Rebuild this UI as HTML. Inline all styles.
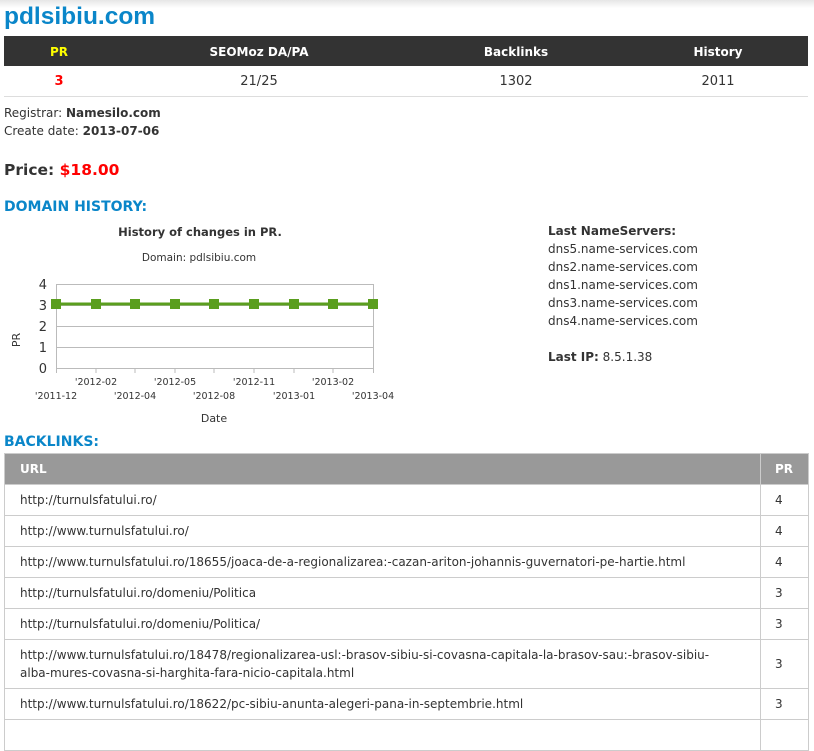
<!DOCTYPE html>
<html><head><meta charset="utf-8"><style>
*{box-sizing:border-box}
body{margin:0;width:814px;height:727px;overflow:hidden;font-family:"DejaVu Sans","Liberation Sans",sans-serif;font-size:12px;color:#333;background:#fff;position:relative}
.shadow{position:absolute;left:0;top:0;width:814px;height:8px;background:linear-gradient(#e6e6e6,#fff)}
h1{position:absolute;left:4px;top:3px;margin:0;font-size:24.5px;font-weight:bold;color:#0a86c9;font-family:"Liberation Sans",sans-serif}
table{border-collapse:collapse}
.t1{position:absolute;left:4px;top:36px;width:804px}
.t1 th{background:#333;color:#fff;height:30px;font-size:12px;font-weight:bold;padding-top:2px}
.t1 td{height:30px;text-align:center;border-bottom:1px solid #ddd;font-size:13px;padding-top:2px}
.info{position:absolute;left:4px;top:104px;line-height:18px}
.price{position:absolute;left:4px;top:161px;font-size:15.5px;font-weight:bold}
.h2{position:absolute;left:4px;font-size:14px;font-weight:bold;color:#0a86c9}
.ns{position:absolute;left:548px;top:222px;line-height:18px}
.t2{position:absolute;left:4px;top:453px;width:805px;border:1px solid #ccc}
.t2 th{background:#999;color:#fff;text-align:left;height:31px;padding:0 15px;border:1px solid #ccc;font-size:12px}
.t2 td{border:1px solid #ccc;height:31px;padding:0 15px;line-height:18px}
.t2 td.p{width:48px;padding:0 0 0 14px}
</style></head><body>
<div class="shadow"></div>
<h1>pdlsibiu.com</h1>
<table class="t1"><tr><th style="color:#ff0;width:110px">PR</th><th style="width:290px">SEOMoz DA/PA</th><th style="width:224px">Backlinks</th><th>History</th></tr>
<tr><td style="color:#f00;font-weight:bold">3</td><td>21/25</td><td>1302</td><td>2011</td></tr></table>
<div class="info">Registrar: <b>Namesilo.com</b><br>Create date: <b>2013-07-06</b></div>
<div class="price">Price: <span style="color:#f00">$18.00</span></div>
<div class="h2" style="top:199px">DOMAIN HISTORY:</div>
<svg style="position:absolute;left:0;top:215px" width="410" height="215" font-family="DejaVu Sans,sans-serif">
<text x="200" y="21" text-anchor="middle" font-size="11.5" font-weight="bold" fill="#333">History of changes in PR.</text>
<text x="199" y="46" text-anchor="middle" font-size="10.5" fill="#333">Domain: pdlsibiu.com</text>
<g stroke="#bbb" stroke-width="1"><line x1="56" y1="69.5" x2="373" y2="69.5"/><line x1="56" y1="90.5" x2="373" y2="90.5"/><line x1="56" y1="111.5" x2="373" y2="111.5"/><line x1="56" y1="132.5" x2="373" y2="132.5"/><line x1="56" y1="153.5" x2="373" y2="153.5"/><line x1="56.5" y1="69" x2="56.5" y2="158"/><line x1="373.5" y1="69" x2="373.5" y2="158"/>
<line x1="96" y1="153" x2="96" y2="158"/><line x1="135" y1="153" x2="135" y2="158"/><line x1="175" y1="153" x2="175" y2="158"/><line x1="214" y1="153" x2="214" y2="158"/><line x1="254" y1="153" x2="254" y2="158"/><line x1="294" y1="153" x2="294" y2="158"/><line x1="333" y1="153" x2="333" y2="158"/></g>
<g font-size="13" fill="#333" text-anchor="end"><text x="47" y="74">4</text><text x="47" y="95">3</text><text x="47" y="116">2</text><text x="47" y="137">1</text><text x="47" y="158">0</text></g>
<text x="20" y="125" font-size="11" fill="#333" transform="rotate(-90 20 125)" text-anchor="middle">PR</text>
<line x1="56" y1="89" x2="373" y2="89" stroke="#5a9e1e" stroke-width="3"/>
<g fill="#5a9e1e"><rect x="51" y="84" width="10" height="10"/><rect x="91" y="84" width="10" height="10"/><rect x="130" y="84" width="10" height="10"/><rect x="170" y="84" width="10" height="10"/><rect x="209" y="84" width="10" height="10"/><rect x="249" y="84" width="10" height="10"/><rect x="289" y="84" width="10" height="10"/><rect x="328" y="84" width="10" height="10"/><rect x="368" y="84" width="10" height="10"/></g>
<g font-size="9.5" fill="#333" text-anchor="middle"><text x="96" y="170">'2012-02</text><text x="175" y="170">'2012-05</text><text x="254" y="170">'2012-11</text><text x="333" y="170">'2013-02</text>
<text x="56" y="184">'2011-12</text><text x="135" y="184">'2012-04</text><text x="214" y="184">'2012-08</text><text x="294" y="184">'2013-01</text><text x="373" y="184">'2013-04</text></g>
<text x="214" y="207" font-size="11" fill="#333" text-anchor="middle">Date</text>
</svg>
<div class="ns"><b>Last NameServers:</b><br>dns5.name-services.com<br>dns2.name-services.com<br>dns1.name-services.com<br>dns3.name-services.com<br>dns4.name-services.com<br><br><b>Last IP:</b> 8.5.1.38</div>
<div class="h2" style="top:434px">BACKLINKS:</div>
<table class="t2">
<tr><th>URL</th><th style="padding-left:14px">PR</th></tr>
<tr><td>http://turnulsfatului.ro/</td><td class="p">4</td></tr>
<tr><td>http://www.turnulsfatului.ro/</td><td class="p">4</td></tr>
<tr><td>http://www.turnulsfatului.ro/18655/joaca-de-a-regionalizarea:-cazan-ariton-johannis-guvernatori-pe-hartie.html</td><td class="p">4</td></tr>
<tr><td>http://turnulsfatului.ro/domeniu/Politica</td><td class="p">3</td></tr>
<tr><td>http://turnulsfatului.ro/domeniu/Politica/</td><td class="p">3</td></tr>
<tr><td style="height:49px">http://www.turnulsfatului.ro/18478/regionalizarea-usl:-brasov-sibiu-si-covasna-capitala-la-brasov-sau:-brasov-sibiu-<br>alba-mures-covasna-si-harghita-fara-nicio-capitala.html</td><td class="p">3</td></tr>
<tr><td>http://www.turnulsfatului.ro/18622/pc-sibiu-anunta-alegeri-pana-in-septembrie.html</td><td class="p">3</td></tr>
<tr><td>&nbsp;</td><td class="p">&nbsp;</td></tr>
</table>
</body></html>
